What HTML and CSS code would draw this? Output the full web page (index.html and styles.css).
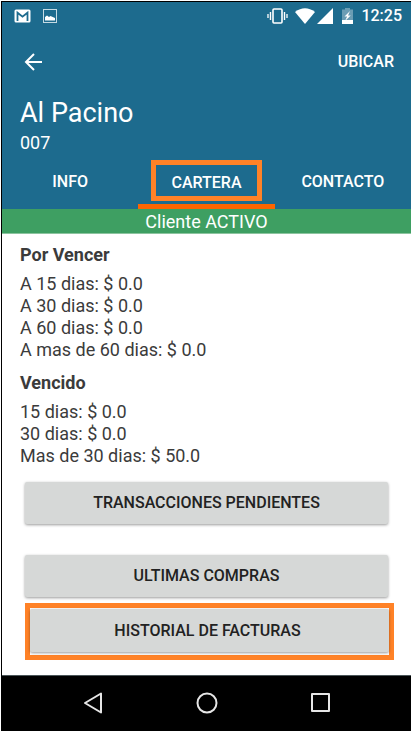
FILE: index.html
```html
<!DOCTYPE html>
<html lang="es">
<head>
<meta charset="utf-8">
<meta name="viewport" content="width=device-width, initial-scale=1">
<title>Al Pacino</title>
<link rel="stylesheet" href="styles.css">
</head>
<body>
<div class="device">
  <header class="header">
    <div class="status">
      <svg class="icon-mail" width="17" height="14" viewBox="0 0 17 14" aria-hidden="true"><rect x="0.5" y="0.5" width="16" height="13" rx="1.5" fill="#fff"/><path d="M3.500 12V3.700l5 4 5-4V12" fill="none" stroke="#1d6b8e" stroke-width="1.800"/></svg>
      <svg class="icon-photo" width="14" height="14" viewBox="0 0 14 14" aria-hidden="true"><rect x="0.500" y="0.500" width="13" height="13" fill="none" stroke="#c5dae3"/><path d="M2 11.500V8l2-1.500 2 1.500 1.500-1 4.500 2v2.500z" fill="#fff"/></svg>
      <svg class="icon-vibrate" width="21" height="16" viewBox="0 0 21 16" fill="none" stroke="#fff" aria-hidden="true"><rect x="6" y="1" width="9" height="14" rx="1" stroke-width="1.600"/><path d="M3.500 4v8M17.500 4v8" stroke-width="1.400"/><path d="M1 6v4M20 6v4" stroke-width="1.300"/></svg>
      <svg class="icon-wifi" width="20" height="16" viewBox="0 0 20 16" aria-hidden="true"><path d="M0 4Q10-3.500 20 4L10 16z" fill="#fff"/></svg>
      <svg class="icon-signal" width="16" height="16" viewBox="0 0 16 16" aria-hidden="true"><path d="M16 0v16H0z" fill="#fff"/></svg>
      <svg class="icon-battery" width="11" height="16" viewBox="0 0 11 16" aria-hidden="true"><path d="M3 0h5v1.500h3V12H0V1.500h3z" fill="#6b9db4"/><path d="M0 12h11v4H0z" fill="#fff"/><path d="M8 3L2.500 8.500h2.700L3 13l5.700-5.500H6z" fill="#fff"/></svg>
      <span class="clock">12:25</span>
    </div>
    <div class="toolbar">
      <button class="back" type="button" aria-label="Volver"><svg width="18" height="18" viewBox="0 0 18 18" fill="none" stroke="#fff" stroke-width="2" aria-hidden="true"><path d="M18 9H2M10 1L2 9l8 8"/></svg></button>
      <button class="locate" type="button">UBICAR</button>
    </div>
    <div class="identity">
      <h1 class="name">Al Pacino</h1>
      <p class="code">007</p>
    </div>
    <nav class="tabs">
      <a class="tab" href="#info">INFO</a>
      <a class="tab tab-active" href="#cartera" aria-current="page"><span class="tab-mark">CARTERA</span></a>
      <a class="tab" href="#contacto">CONTACTO</a>
    </nav>
  </header>
  <p class="banner">Cliente ACTIVO</p>
  <main class="content">
    <section class="group">
      <h2 class="heading">Por Vencer</h2>
      <p>A 15 dias: $ 0.0</p>
      <p>A 30 dias: $ 0.0</p>
      <p>A 60 dias: $ 0.0</p>
      <p>A mas de 60 dias: $ 0.0</p>
    </section>
    <section class="group">
      <h2 class="heading">Vencido</h2>
      <p>15 dias: $ 0.0</p>
      <p>30 dias: $ 0.0</p>
      <p>Mas de 30 dias: $ 50.0</p>
    </section>
    <div class="actions">
      <button class="action action-first" type="button">TRANSACCIONES PENDIENTES</button>
      <button class="action" type="button">ULTIMAS COMPRAS</button>
      <div class="marked"><button class="action" type="button">HISTORIAL DE FACTURAS</button></div>
    </div>
  </main>
  <nav class="navbar">
    <button class="nav-key" type="button" aria-label="Atrás"><svg width="22" height="24" viewBox="0 0 22 24" fill="none" stroke="#e6e6e6" stroke-width="2" stroke-linejoin="round" aria-hidden="true"><path d="M19 2.500v19L3 12z"/></svg></button>
    <button class="nav-key" type="button" aria-label="Inicio"><svg width="22" height="24" viewBox="0 0 22 24" fill="none" stroke="#e6e6e6" stroke-width="2" aria-hidden="true"><circle cx="11" cy="12" r="9.500"/></svg></button>
    <button class="nav-key" type="button" aria-label="Recientes"><svg width="22" height="24" viewBox="0 0 22 24" fill="none" stroke="#e6e6e6" stroke-width="2" stroke-linejoin="round" aria-hidden="true"><rect x="2" y="3" width="17" height="17"/></svg></button>
  </nav>
</div>
</body>
</html>
```
FILE: styles.css
```css
* { box-sizing: border-box; }
body {
  margin: 0;
  background: #fff;
  color: #3b3b3b;
  font: 18px/22px Roboto, sans-serif;
}
h1, h2, p { margin: 0; font-weight: 400; }
button {
  padding: 0;
  border: 0;
  background: none;
  color: inherit;
  font: inherit;
}
svg { display: block; }
.device {
  display: flex;
  flex-direction: column;
  min-height: calc(100vh - 2px);
  margin: 1px 0 1px 1px;
  border-top: 1px solid #000;
  border-left: 1px solid #000;
}
.header { background: #1d6b8e; color: #fff; }
.status {
  display: flex;
  align-items: center;
  height: 28px;
  padding: 0 9px 0 12px;
}
.icon-photo { margin-left: 12px; }
.icon-vibrate { margin-left: auto; }
.icon-wifi { margin-left: 7px; }
.icon-signal { margin-left: 2px; }
.icon-battery { margin-left: 9px; }
.clock { margin-left: 8px; font-size: 16px; font-weight: 500; line-height: 20px; }
.toolbar {
  display: flex;
  align-items: center;
  justify-content: space-between;
  height: 64px;
  padding: 0 17px 0 22px;
}
.locate { font-size: 16px; font-weight: 500; }
.identity { padding: 2px 18px 0; }
.name { font-size: 27px; line-height: 34px; }
.code { line-height: 26px; }
.tabs {
  display: grid;
  grid-template-columns: repeat(3, 1fr);
  height: 53px;
}
.tab {
  display: flex;
  align-items: center;
  justify-content: center;
  padding-top: 4px;
  border-bottom: 5px solid transparent;
  color: inherit;
  font-size: 16px;
  font-weight: 500;
  text-decoration: none;
}
.tab-active { border-color: #fd6500; }
.tab-mark {
  margin-bottom: 3px;
  padding: 7px 15px 2px;
  border: 5px solid #ff8227;
}
.banner {
  padding-top: 1px;
  border-bottom: 1px solid #8cc49f;
  background: #3e9f62;
  color: #fff;
  line-height: 23px;
  text-align: center;
}
.content { flex: 1; padding: 10px 17px 15px 18px; }
.group { margin-bottom: 11px; }
.heading {
  margin-bottom: 7px;
  font-size: 18px;
  font-weight: 700;
}
.actions { margin: 15px 0 0 5px; }
.action {
  display: block;
  width: calc(100% - 6px);
  height: 42px;
  border-radius: 2px;
  background: #d6d8d7;
  box-shadow: 0 1px 3px rgba(0, 0, 0, 0.4);
  color: #222;
  font-size: 16px;
  font-weight: 500;
}
.action-first { margin-bottom: 31px; }
.marked {
  margin-top: 6px;
  padding: 1px 0 3px;
  border: 5px solid #ff8227;
}
.marked .action { width: 100%; height: 43px; padding-right: 4px; }
.navbar {
  display: flex;
  align-items: center;
  justify-content: center;
  gap: 92px;
  height: 56px;
  padding-bottom: 2px;
  border-top: 1px solid #4a5558;
  background: #000;
}
```
